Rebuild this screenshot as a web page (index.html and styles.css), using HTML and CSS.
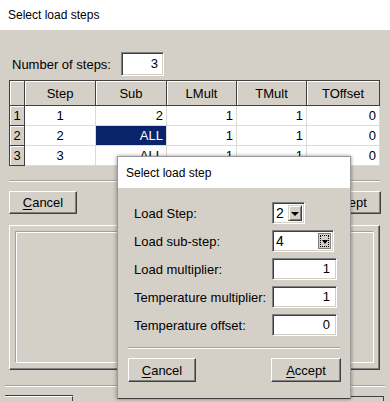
FILE: index.html
```html
<!DOCTYPE html>
<html>
<head>
<meta charset="utf-8">
<link rel="stylesheet" href="styles.css">
</head>
<body>
<div class="win">
  <div class="title">Select load steps</div>
  <div class="main">
    <div class="steps">
      <span class="steps-label">Number of steps:</span>
      <div class="field steps-field">3</div>
    </div>
    <div class="grid">
      <div class="hd corner"></div>
      <div class="hd">Step</div>
      <div class="hd">Sub</div>
      <div class="hd">LMult</div>
      <div class="hd">TMult</div>
      <div class="hd">TOffset</div>

      <div class="rh">1</div>
      <div class="cell center">1</div>
      <div class="cell">2</div>
      <div class="cell">1</div>
      <div class="cell">1</div>
      <div class="cell">0</div>

      <div class="rh">2</div>
      <div class="cell center">2</div>
      <div class="cell sel">ALL</div>
      <div class="cell">1</div>
      <div class="cell">1</div>
      <div class="cell">0</div>

      <div class="rh">3</div>
      <div class="cell center">3</div>
      <div class="cell">ALL</div>
      <div class="cell">1</div>
      <div class="cell">1</div>
      <div class="cell">0</div>
    </div>
    <div class="sep"></div>
    <div class="btnrow">
      <div class="btn"><u>C</u>ancel</div>
      <div class="btn"><u>A</u>ccept</div>
    </div>
    <div class="group"><div class="group-inner"></div></div>
    <div class="sep sep-wide"></div>
    <div class="cutrow">
      <div class="cut cut-left"></div>
      <div class="cut cut-right"></div>
    </div>
  </div>

  <div class="popup">
    <div class="ptitle">Select load step</div>
    <div class="pbody">
      <div class="prow">
        <span class="plabel">Load Step:</span>
        <div class="combo combo-small"><span class="cval">2</span><span class="dd"><span class="tri"></span></span></div>
      </div>
      <div class="prow">
        <span class="plabel">Load sub-step:</span>
        <div class="combo combo-wide"><span class="cval">4</span><span class="dd dd-pressed"><span class="focus"><span class="tri"></span></span></span></div>
      </div>
      <div class="prow">
        <span class="plabel">Load multiplier:</span>
        <div class="field pfield">1</div>
      </div>
      <div class="prow">
        <span class="plabel">Temperature multiplier:</span>
        <div class="field pfield">1</div>
      </div>
      <div class="prow">
        <span class="plabel">Temperature offset:</span>
        <div class="field pfield">0</div>
      </div>
      <div class="psep"></div>
      <div class="pbtns">
        <div class="btn pbtn"><u>C</u>ancel</div>
        <div class="btn pbtn pbtn-accept"><u>A</u>ccept</div>
      </div>
    </div>
  </div>
</div>
</body>
</html>
```

FILE: styles.css
```css
* { box-sizing: border-box; }

html, body {
  margin: 0;
  padding: 0;
}

body {
  width: 390px;
  height: 402px;
  overflow: hidden;
  background: #d4d0c8;
  font-family: "Liberation Sans", Arial, sans-serif;
  font-size: 13px;
  color: #000;
}

.win {
  position: relative;
  width: 390px;
  height: 402px;
  background: #d4d0c8;
}

.title {
  height: 30px;
  background: #fff;
  font-size: 12px;
  line-height: 30px;
  padding-left: 8px;
  color: #000;
}

.main {
  padding: 22px 0 0 9px;
}

.steps {
  display: flex;
  align-items: center;
  height: 24px;
}

.steps-label {
  width: 112px;
  padding-left: 3px;
}

.field {
  background: #fff;
  border-top: 1px solid #808080;
  border-left: 1px solid #808080;
  border-right: 1px solid #fff;
  border-bottom: 1px solid #fff;
  box-shadow: inset 1px 1px 0 #404040, inset -1px -1px 0 #d4d0c8;
  text-align: right;
  padding-right: 5px;
}

.steps-field {
  width: 43px;
  height: 24px;
  line-height: 22px;
}

.grid {
  margin-top: 4px;
  display: grid;
  grid-template-columns: 15px 71px 71px 70px 70px 73px;
  grid-template-rows: 25px 20px 20px 20px;
  width: 371px;
  border-top: 1px solid #404040;
  border-left: 1px solid #404040;
  background: #fff;
}

.hd, .rh {
  background: #d4d0c8;
  border-right: 1px solid #404040;
  border-bottom: 1px solid #404040;
  box-shadow: inset 1px 1px 0 #fff;
  display: flex;
  align-items: center;
  justify-content: center;
}

.cell {
  background: #fff;
  border-right: 1px solid #dcdad4;
  border-bottom: 1px solid #dcdad4;
  display: flex;
  align-items: center;
  justify-content: flex-end;
  padding-right: 3px;
}

.cell.center {
  justify-content: center;
  padding-right: 0;
}

.cell.sel {
  background: #0a246a;
  color: #fff;
}

.sep {
  margin-top: 14px;
  width: 371px;
  height: 2px;
  border-top: 1px solid #a0a0a0;
  border-bottom: 1px solid #fff;
}

.btnrow {
  margin-top: 9px;
  width: 372px;
  display: flex;
  justify-content: space-between;
}

.btn {
  width: 68px;
  height: 23px;
  display: flex;
  align-items: center;
  justify-content: center;
  background: #d4d0c8;
  border-top: 1px solid #fff;
  border-left: 1px solid #fff;
  border-right: 1px solid #404040;
  border-bottom: 1px solid #404040;
  box-shadow: inset -1px -1px 0 #808080;
}

.btn u {
  text-decoration: underline;
  text-underline-offset: 2px;
}

.group {
  margin-top: 11px;
  width: 371px;
  height: 145px;
  padding: 5px 5px 6px 5px;
  border-top: 1px solid #fff;
  border-left: 1px solid #fff;
  border-right: 1px solid #404040;
  border-bottom: 1px solid #404040;
  box-shadow: inset -1px -1px 0 #808080;
}

.group-inner {
  width: 100%;
  height: 100%;
  border-top: 1px solid #a0a0a0;
  border-left: 1px solid #a0a0a0;
  border-right: 1px solid #fff;
  border-bottom: 1px solid #fff;
  box-shadow: inset 1px 1px 0 #fff, 0 0 0 0 transparent;
}

.sep-wide {
  margin-top: 15px;
  margin-left: -4px;
  width: 380px;
}

.cutrow {
  margin-top: 9px;
  margin-left: -4px;
  display: flex;
  justify-content: space-between;
  width: 379px;
}

.cut {
  height: 5px;
}

.cut-left {
  width: 68px;
  border-top: 1px solid #fff;
  border-right: 1px solid #404040;
  box-shadow: 0 -1px 0 #404040;
}

.cut-right {
  width: 34px;
  border-top: 1px solid #404040;
  border-right: 1px solid #404040;
}

/* popup dialog */
.popup {
  position: absolute;
  left: 117px;
  top: 156px;
  width: 234px;
  height: 243px;
  background: #d4d0c8;
  border: 1px solid #9a9a9a;
  border-bottom-color: #404040;
  box-shadow: -1px 0 4px rgba(0, 0, 0, 0.25), 1px 0 3px rgba(0, 0, 0, 0.2);
}

.ptitle {
  height: 31px;
  background: #fff;
  font-size: 12px;
  line-height: 32px;
  padding-left: 8px;
}

.pbody {
  padding: 14px 9px 0 10px;
}

.prow {
  display: flex;
  align-items: center;
  height: 22px;
  margin-bottom: 6px;
}

.plabel {
  width: 144px;
  padding-left: 6px;
}

.combo {
  display: flex;
  align-items: center;
  height: 22px;
  background: #fff;
  border-top: 1px solid #808080;
  border-left: 1px solid #808080;
  border-right: 1px solid #fff;
  border-bottom: 1px solid #fff;
  box-shadow: inset 1px 1px 0 #404040, inset -1px -1px 0 #d4d0c8;
  padding: 2px 2px 2px 3px;
}

.combo-small { width: 33px; }
.combo-wide { width: 62px; }

.cval {
  flex: 1;
  font-size: 14px;
  line-height: 16px;
}

.dd {
  width: 14px;
  height: 16px;
  background: #d4d0c8;
  border-top: 1px solid #d4d0c8;
  border-left: 1px solid #d4d0c8;
  border-right: 1px solid #404040;
  border-bottom: 1px solid #404040;
  box-shadow: inset 1px 1px 0 #fff, inset -1px -1px 0 #808080;
  display: flex;
  align-items: center;
  justify-content: center;
}

.dd-pressed {
  border: 1px solid #808080;
  box-shadow: none;
  width: 13px;
}

.focus {
  width: 9px;
  height: 12px;
  border: 1px dotted #000;
  display: flex;
  align-items: center;
  justify-content: center;
}

.tri {
  width: 0;
  height: 0;
  border-left: 4px solid transparent;
  border-right: 4px solid transparent;
  border-top: 4px solid #000;
  margin-top: 1px;
}

.focus .tri {
  border-left-width: 3px;
  border-right-width: 3px;
  border-top-width: 4px;
}

.pfield {
  width: 65px;
  height: 22px;
  line-height: 20px;
  padding-right: 6px;
}

.psep {
  margin-top: 11px;
  width: 212px;
  height: 2px;
  border-top: 1px solid #a0a0a0;
  border-bottom: 1px solid #fff;
}

.pbtns {
  margin-top: 9px;
  display: flex;
  justify-content: space-between;
}

.pbtn {
  height: 24px;
}

.pbtn-accept {
  width: 70px;
}
```
